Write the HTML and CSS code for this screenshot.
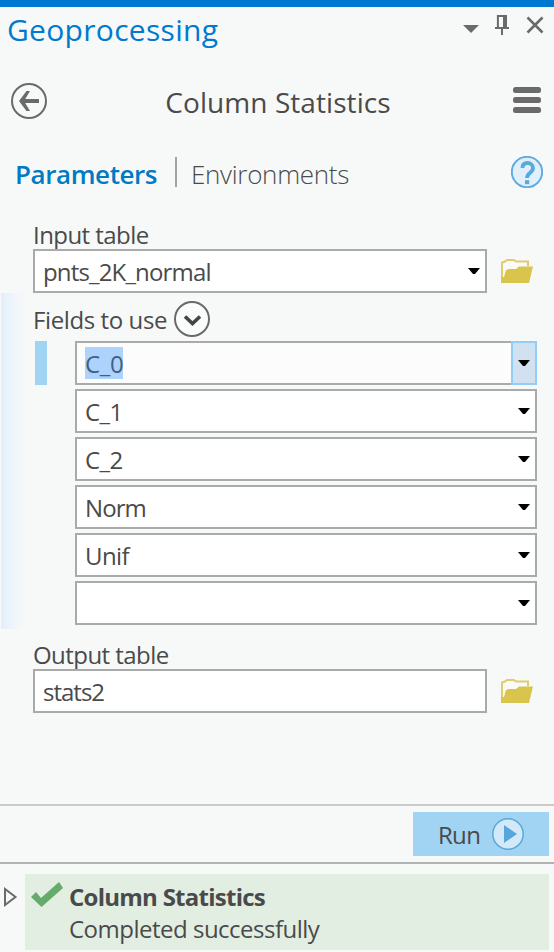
FILE: index.html
```html
<!DOCTYPE html>
<html lang="en">
<head>
<meta charset="utf-8">
<title>Geoprocessing</title>
<link rel="stylesheet" href="styles.css">
</head>
<body>
<svg class="defs" width="0" height="0">
  <symbol id="caret" viewBox="0 0 12 6"><path d="M0 0h12L7 6H5z"/></symbol>
  <symbol id="folder" viewBox="0 0 32 26">
    <path d="M1 24V4.500l3-1L6 2h7l2 1.500h12V8" fill="#fafafa" stroke="#dfcc6c" stroke-width="2"/>
    <path d="M0 25V19h3l2-7 3-1h7l3-2.500h14L28 25z" fill="#d9c44c"/>
  </symbol>
</svg>
<main class="pane">
  <header class="titlebar">
    <h1 class="pane-title"><span>Geoprocessing</span></h1>
    <svg class="window-icons" width="82" height="24" viewBox="0 0 82 24" fill="none">
      <path d="M0 12h16L8 20z" fill="#6a6a6a"/>
      <path d="M34.900 15V3h8v12M32 15.100h14M39 15v7" stroke="#6a6a6a" stroke-width="2"/>
      <path d="M40 2h4v13h-4z" fill="#6a6a6a"/>
      <path d="M64.500 4.500l15 15M79.500 4.500l-15 15" stroke="#6a6a6a" stroke-width="2.600"/>
    </svg>
  </header>

  <div class="tool-header">
    <svg width="36" height="36" viewBox="0 0 36 36" fill="none" stroke="#6a6a6a">
      <circle cx="18" cy="18" r="17" stroke-width="2"/>
      <path d="M11 18h17" stroke-width="4"/>
      <path d="M19 8h-3.500l-7.500 10 7.500 10H19l-6-10z" fill="#6a6a6a" stroke="none"/>
    </svg>
    <h2 class="tool-name"><span>Column Statistics</span></h2>
    <svg class="menu" width="28" height="26" viewBox="0 0 28 26" fill="#6a6a6a">
      <rect width="28" height="6" rx="2.500"/><rect y="10" width="28" height="6" rx="2.500"/><rect y="20" width="28" height="6" rx="2.500"/>
    </svg>
  </div>

  <nav class="tabs">
    <span class="tab tab-active">Parameters</span>
    <span class="tab tab-light">Environments</span>
    <svg class="help" width="32" height="32" viewBox="0 0 32 32" fill="none">
      <circle cx="16" cy="16" r="15.200" fill="#e1effb" stroke="#62abe0" stroke-width="2"/>
      <path d="M11.500 12C11.500 8 13.500 7 16.500 7s5.500 2 5.500 5c0 5-6 4.500-6 10" stroke="#5aa9dd" stroke-width="3.800"/>
      <path d="M14 24.200h4.200v4H14z" fill="#5aa9dd"/>
    </svg>
  </nav>

  <form class="params">
    <label class="label"><span class="t-input">Input table</span></label>
    <div class="row">
      <div class="box"><span class="t-pnts">pnts_2K_normal</span><svg class="caret" width="12" height="6"><use href="#caret"/></svg></div>
      <svg width="32" height="26"><use href="#folder"/></svg>
    </div>

    <section class="fields">
      <div class="fields-head">
        <span class="t-fields">Fields to use</span>
        <svg width="36" height="36" viewBox="0 0 36 36" fill="none">
          <circle cx="18" cy="18" r="17" fill="#fafbfb" stroke="#6a6a6a" stroke-width="2"/>
          <path d="M11 15.500l7.500 7 7.500-7" stroke="#454545" stroke-width="3.600"/>
        </svg>
      </div>
      <div class="field-row">
        <i class="marker"></i>
        <div class="box focused"><span class="selection">C_0</span><span class="drop"><svg width="12" height="6"><use href="#caret"/></svg></span></div>
      </div>
      <div class="field-row"><div class="box"><span class="t-c">C_1</span><svg class="caret" width="12" height="6"><use href="#caret"/></svg></div></div>
      <div class="field-row"><div class="box"><span class="t-c">C_2</span><svg class="caret" width="12" height="6"><use href="#caret"/></svg></div></div>
      <div class="field-row"><div class="box"><span class="t-norm">Norm</span><svg class="caret" width="12" height="6"><use href="#caret"/></svg></div></div>
      <div class="field-row"><div class="box"><span class="t-unif">Unif</span><svg class="caret" width="12" height="6"><use href="#caret"/></svg></div></div>
      <div class="field-row"><div class="box"><svg class="caret" width="12" height="6"><use href="#caret"/></svg></div></div>
    </section>

    <label class="label label-output"><span class="t-output">Output table</span></label>
    <div class="row">
      <div class="box"><span class="t-stats">stats2</span></div>
      <svg width="32" height="26"><use href="#folder"/></svg>
    </div>
  </form>

  <div class="actions">
    <button class="run" type="button"><span>Run</span>
      <svg width="32" height="32" viewBox="0 0 32 32"><circle cx="16" cy="16" r="15.200" fill="#d3e9f8" stroke="#58a8dc" stroke-width="1.500"/><path d="M12 7l13 9-13 9z" fill="#55a6db"/></svg>
    </button>
  </div>

  <footer class="status">
    <svg class="expander" width="14" height="20" viewBox="0 0 14 20" fill="none" stroke="#6a6a6a" stroke-width="2"><path d="M1 2v16l10.500-8z"/></svg>
    <div class="result">
      <svg class="check" width="32" height="26" viewBox="0 0 32 26"><path d="M0 15l5-5 5 6L28 0l4 6-21.500 19z" fill="#65ab69"/></svg>
      <div class="message"><strong>Column Statistics</strong><span>Completed successfully</span></div>
    </div>
  </footer>
</main>
</body>
</html>
```
FILE: styles.css
```css
* { box-sizing: border-box; }
body { margin: 0; background: #f7f9f8; color: #4a4a4a; font: 24px/28px "Open Sans", "Noto Sans", sans-serif; }
svg { display: block; flex: none; }
.defs { position: absolute; }
.pane { height: 952px; display: flex; flex-direction: column; border-top: 7px solid #0078d2; overflow: hidden; white-space: nowrap; }
.titlebar { height: 46px; padding: 0 9px 0 7px; display: flex; justify-content: space-between; }
.pane-title { margin: 0; font-size: 30px; line-height: 46px; font-weight: 400; color: #0079cf; letter-spacing: 0.3px; }
.window-icons { margin-top: 6px; }
.tool-header { height: 36px; margin-top: 30px; padding: 0 13px 0 11px; display: flex; align-items: center; justify-content: space-between; }
.tool-name { margin: 0 4px 0 0; padding-top: 2px; font-size: 28px; line-height: 36px; font-weight: 400; letter-spacing: 0.07px; }
.menu { margin-top: -2px; }
.tabs { height: 32px; margin-top: 37px; padding: 0 11px 0 15px; display: flex; align-items: center; font-size: 26px; }
.tab { line-height: 30px; padding-top: 4px; }
.tab-active { width: 162px; border-right: 2px solid #a3a3a3; padding-top: 2px; height: 30px; color: #007ac2; font-weight: 600; letter-spacing: -0.42px; }
.tab-light { margin-left: 14px; font-weight: 300; letter-spacing: -0.3px; }
.help { margin-left: auto; }
.params { margin: 32px 0 0; flex: 1; }
.label { display: block; height: 29px; padding-left: 33px; line-height: 29px; }
.label-output { height: 40px; padding-top: 11px; }
.row { display: flex; align-items: center; gap: 14px; padding: 0 21px 0 33px; }
.box { flex: 1; height: 44px; padding: 2px 5px 0 8px; display: flex; align-items: center; border: 2px solid #a9abaa; background: #fff; }
.caret { margin: -2px 0 0 auto; fill: #000; }
.t-input, .t-output { letter-spacing: -0.55px; }
.t-pnts { letter-spacing: -0.84px; }
.t-c { letter-spacing: -0.6px; }
.t-norm { letter-spacing: -0.9px; }
.t-unif { letter-spacing: -0.6px; }
.t-stats { letter-spacing: -1px; }
.fields { height: 336px; margin-left: 1px; background: linear-gradient(90deg, #e0effa 0, #eef5fb 11px, #f7f9f8 26px); }
.fields-head { height: 48px; padding: 4px 0 0 32px; display: flex; align-items: center; gap: 8px; }
.t-fields { width: 133px; padding-top: 2px; letter-spacing: -0.4px; }
.field-row { display: flex; height: 44px; margin: 0 17px 4px 74px; }
.marker { width: 12px; margin: 0 28px 0 -40px; background: #a0d4f2; }
.focused { background: #fcfcfc; padding-right: 0; padding-top: 0; }
.selection { height: 32px; line-height: 34px; background: #add3fc; color: #3d6185; letter-spacing: -0.3px; }
.drop { width: 26px; height: 44px; margin: -2px -2px -2px auto; border: 2px solid #92ccf8; background: #d2e1ef; display: grid; place-items: center; }
.actions { height: 58px; padding: 6px 5px 0; display: flex; justify-content: flex-end; border-top: 2px solid #c9cac9; }
.run { width: 136px; height: 44px; padding: 0 25px; border: 0; display: flex; align-items: center; justify-content: space-between; background: #a0d4f2; color: #4a4a4a; font: inherit; }
.run span { padding-top: 2px; letter-spacing: -0.7px; }
.status { height: 90px; flex: none; padding: 10px 5px 2px 4px; display: flex; border-top: 2px solid #b1b3b2; }
.expander { margin: 13px 7px 0 0; }
.result { flex: 1; height: 76px; padding-left: 6px; display: flex; background: #e3eee2; }
.check { margin: 8px 6px 0 0; }
.message { display: flex; flex-direction: column; padding-top: 7px; line-height: 32px; letter-spacing: -0.5px; }
.message strong { font-weight: 700; letter-spacing: -0.74px; }
```
